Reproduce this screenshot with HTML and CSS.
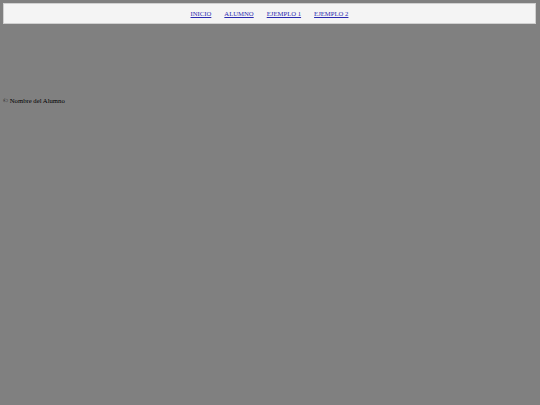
FILE: index.html
```html
<!DOCTYPE html>
<html lang="es">
<head>
<meta charset="utf-8">
<title>Inicio</title>
<link rel="stylesheet" href="styles.css">
</head>
<body>
<nav class="menu">
  <a href="#" class="menu-link">INICIO</a>
  <a href="#" class="menu-link">ALUMNO</a>
  <a href="#" class="menu-link">EJEMPLO 1</a>
  <a href="#" class="menu-link">EJEMPLO 2</a>
</nav>
<main class="content"></main>
<footer class="footer">© Nombre del Alumno</footer>
</body>
</html>
```
FILE: styles.css
```css
html, body {
  margin: 0;
  padding: 0;
}
body {
  background: #808080;
  padding: 3px;
  font-family: "Liberation Serif", serif;
  font-size: 6.7px;
  color: #000;
}
.menu {
  display: flex;
  justify-content: center;
  align-items: center;
  gap: 13px;
  height: 19px;
  margin-right: 1px;
  background: #f4f4f4;
  border: 1px solid #d0d0d0;
}
.menu-link {
  color: #2a2ab0;
  text-decoration: underline;
}
.content {
  height: 73px;
}
.footer {
  line-height: 8px;
}
```
